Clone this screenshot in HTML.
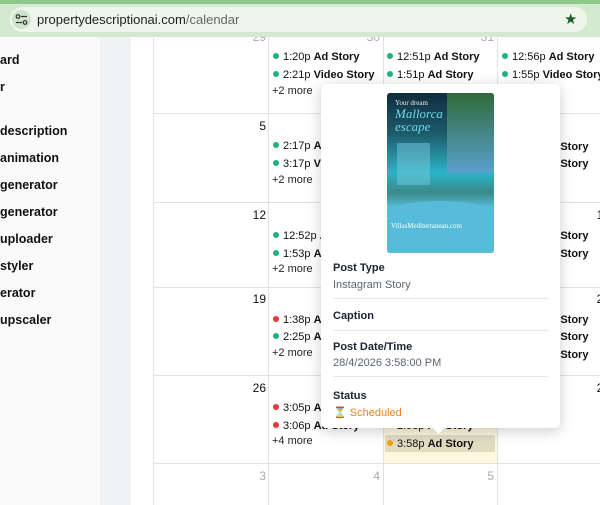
<!DOCTYPE html>
<html><head><style>
*{margin:0;padding:0;box-sizing:border-box}
body{width:600px;height:505px;overflow:hidden;position:relative;font-family:"Liberation Sans","DejaVu Sans",sans-serif;background:#fff;color:#111}
.a{position:absolute}
.bar{left:0;top:0;width:600px;height:37px;background:#d3ead1;border-top:4px solid #8cc98a}
.pill{left:10px;top:7px;width:577px;height:25px;border-radius:13px;background:#eef6ec}
.ic{left:12px;top:10px;width:19px;height:19px;border-radius:50%;background:#cfe3cc}
.url{left:37px;top:12px;font-size:13px;color:#202020}
.url span{color:#666}
.side{left:0;top:37px;width:100px;height:468px;background:#fafafa}
.side2{left:100px;top:37px;width:31px;height:468px;background:#f1f2f4}
.sl{left:0;font-size:12.5px;font-weight:bold;color:#111}
.vl{top:37px;width:1px;height:468px;background:#e2e2e2}
.hl{left:153px;width:447px;height:1px;background:#e2e2e2}
.dn{font-size:12px;text-align:right;width:100px}
.ev{font-size:11px;color:#111;white-space:nowrap}
.ev b{font-weight:bold}
.dot{display:inline-block;width:6px;height:6px;border-radius:50%;margin-right:4px;vertical-align:1px}
.g{background:#1db37a}.r{background:#e53935}.o{background:#f59e0b}
.more{font-size:11px;color:#222}
.pop{left:321px;top:84px;width:239px;height:344px;background:#fff;border-radius:5px;box-shadow:0 3px 14px rgba(0,0,0,.2)}
.h{left:333px;font-size:11px;font-weight:bold;color:#1a2233}
.v{left:333px;font-size:11px;color:#5d6470}
.sep{left:333px;width:215px;height:1px;background:#e6e6e6}
</style></head><body>
<div class="a side"></div>
<div class="a side2"></div>
<div class="a sl" style="top:53px">ard</div>
<div class="a sl" style="top:80px">r</div>
<div class="a sl" style="top:124px">description</div>
<div class="a sl" style="top:151px">animation</div>
<div class="a sl" style="top:178px">generator</div>
<div class="a sl" style="top:205px">generator</div>
<div class="a sl" style="top:232px">uploader</div>
<div class="a sl" style="top:259px">styler</div>
<div class="a sl" style="top:286px">erator</div>
<div class="a sl" style="top:313px">upscaler</div>

<div class="a" style="left:384px;top:376px;width:113px;height:87px;background:#fcf7de"></div>

<div class="a vl" style="left:153px"></div>
<div class="a vl" style="left:268px"></div>
<div class="a vl" style="left:383px"></div>
<div class="a vl" style="left:497px"></div>
<div class="a hl" style="top:113px"></div>
<div class="a hl" style="top:202px"></div>
<div class="a hl" style="top:287px"></div>
<div class="a hl" style="top:375px"></div>
<div class="a hl" style="top:463px"></div>

<div class="a dn" style="left:166px;top:30px;color:#aaa">29</div>
<div class="a dn" style="left:280px;top:30px;color:#aaa">30</div>
<div class="a dn" style="left:394px;top:30px;color:#aaa">31</div>
<div class="a dn" style="left:166px;top:119px">5</div>
<div class="a dn" style="left:166px;top:208px">12</div>
<div class="a dn" style="left:166px;top:292px">19</div>
<div class="a dn" style="left:166px;top:381px">26</div>
<div class="a dn" style="left:166px;top:469px;color:#aaa">3</div>
<div class="a dn" style="left:280px;top:469px;color:#aaa">4</div>
<div class="a dn" style="left:394px;top:469px;color:#aaa">5</div>

<div class="a ev" style="left:273px;top:51px"><span class="dot g"></span>1:20p <b>Ad Story</b></div>
<div class="a ev" style="left:273px;top:69px"><span class="dot g"></span>2:21p <b>Video Story</b></div>
<div class="a more" style="left:272px;top:85px">+2 more</div>
<div class="a ev" style="left:387px;top:51px"><span class="dot g"></span>12:51p <b>Ad Story</b></div>
<div class="a ev" style="left:387px;top:69px"><span class="dot g"></span>1:51p <b>Ad Story</b></div>
<div class="a ev" style="left:502px;top:51px"><span class="dot g"></span>12:56p <b>Ad Story</b></div>
<div class="a ev" style="left:502px;top:69px"><span class="dot g"></span>1:55p <b>Video Story</b></div>

<div class="a ev" style="left:273px;top:140px"><span class="dot g"></span>2:17p <b>Ad Story</b></div>
<div class="a ev" style="left:273px;top:158px"><span class="dot g"></span>3:17p <b>Video Story</b></div>
<div class="a more" style="left:272px;top:174px">+2 more</div>
<div class="a ev" style="left:273px;top:230px"><span class="dot g"></span>12:52p <b>Ad Story</b></div>
<div class="a ev" style="left:273px;top:248px"><span class="dot g"></span>1:53p <b>Ad Story</b></div>
<div class="a more" style="left:272px;top:263px">+2 more</div>
<div class="a ev" style="left:273px;top:314px"><span class="dot r"></span>1:38p <b>Ad Story</b></div>
<div class="a ev" style="left:273px;top:331px"><span class="dot g"></span>2:25p <b>Ad Story</b></div>
<div class="a more" style="left:272px;top:347px">+2 more</div>
<div class="a ev" style="left:273px;top:402px"><span class="dot r"></span>3:05p <b>Ad Story</b></div>
<div class="a ev" style="left:273px;top:420px"><span class="dot r"></span>3:06p <b>Ad Story</b></div>
<div class="a more" style="left:272px;top:435px">+4 more</div>

<div class="a ev" style="left:502px;top:141px"><span class="dot g"></span>2:00p <b>Ad Story</b></div>
<div class="a ev" style="left:502px;top:158px"><span class="dot g"></span>2:00p <b>Ad Story</b></div>
<div class="a ev" style="left:502px;top:230px"><span class="dot g"></span>2:00p <b>Ad Story</b></div>
<div class="a ev" style="left:502px;top:248px"><span class="dot g"></span>2:00p <b>Ad Story</b></div>
<div class="a ev" style="left:502px;top:314px"><span class="dot g"></span>2:00p <b>Ad Story</b></div>
<div class="a ev" style="left:502px;top:331px"><span class="dot g"></span>2:00p <b>Ad Story</b></div>
<div class="a ev" style="left:502px;top:349px"><span class="dot g"></span>2:00p <b>Ad Story</b></div>
<div class="a dn" style="left:510px;top:381px">27</div>
<div class="a dn" style="left:510px;top:292px">20</div>
<div class="a dn" style="left:510px;top:208px">13</div>
<div class="a dn" style="left:510px;top:119px">6</div>

<div class="a ev" style="left:387px;top:420px"><span class="dot o"></span>2:58p <b>Ad Story</b></div>
<div class="a" style="left:385px;top:435px;width:110px;height:17px;background:#e0dcc2;border-radius:2px"></div>
<div class="a ev" style="left:387px;top:438px"><span class="dot o"></span>3:58p <b>Ad Story</b></div>

<div class="a bar"></div>
<div class="a pill"></div>
<div class="a ic"></div>
<svg class="a" style="left:15px;top:13px" width="13" height="13" viewBox="0 0 13 13"><circle cx="3" cy="3.5" r="1.8" fill="none" stroke="#333" stroke-width="1.2"/><line x1="6" y1="3.5" x2="12" y2="3.5" stroke="#333" stroke-width="1.2"/><circle cx="10" cy="9.5" r="1.8" fill="none" stroke="#333" stroke-width="1.2"/><line x1="1" y1="9.5" x2="7" y2="9.5" stroke="#333" stroke-width="1.2"/></svg>
<div class="a url">propertydescriptionai.com<span>/calendar</span></div>
<div class="a" style="left:564px;top:10px;font-size:15px;color:#1e5a2a">★</div>

<div class="a pop"></div>
<div class="a" style="left:434px;top:423px;width:9px;height:9px;background:#fff;transform:rotate(45deg)"></div>
<div class="a" style="left:387px;top:93px;width:107px;height:160px;border-radius:3px;overflow:hidden;background:linear-gradient(180deg,#0f2c3e 0%,#1d5a6a 25%,#2bb3c8 50%,#3a8a88 62%,#58bedb 72%,#58bedb 100%)">
<div class="a" style="left:60px;top:0;width:47px;height:80px;background:linear-gradient(180deg,#2f6a3a,#5aa0d0)"></div>
<div class="a" style="left:8px;top:6px;font-family:'Liberation Serif',serif;font-size:7px;color:#eee">Your dream</div>
<div class="a" style="left:8px;top:14px;font-family:'Liberation Serif',serif;font-style:italic;font-size:13px;color:#6fd6ea;line-height:13px">Mallorca<br>escape</div>
<div class="a" style="left:10px;top:50px;width:33px;height:42px;background:rgba(120,200,220,.5)"></div>
<div class="a" style="left:0;top:108px;width:107px;height:52px;background:#57bcd9;border-radius:50% 50% 0 0/12px 12px 0 0"></div>
<div class="a" style="left:4px;top:129px;font-family:'Liberation Serif',serif;font-size:7px;color:#fff">VillasMediterranean.com</div>
</div>
<div class="a h" style="top:262px">Post Type</div>
<div class="a v" style="top:279px">Instagram Story</div>
<div class="a sep" style="top:298px"></div>
<div class="a h" style="top:310px">Caption</div>
<div class="a sep" style="top:330px"></div>
<div class="a h" style="top:341px">Post Date/Time</div>
<div class="a v" style="top:357px">28/4/2026 3:58:00 PM</div>
<div class="a sep" style="top:376px"></div>
<div class="a h" style="top:390px">Status</div>
<div class="a" style="left:333px;top:406px;font-size:11px;color:#e0861a">⏳ Scheduled</div>
</body></html>
